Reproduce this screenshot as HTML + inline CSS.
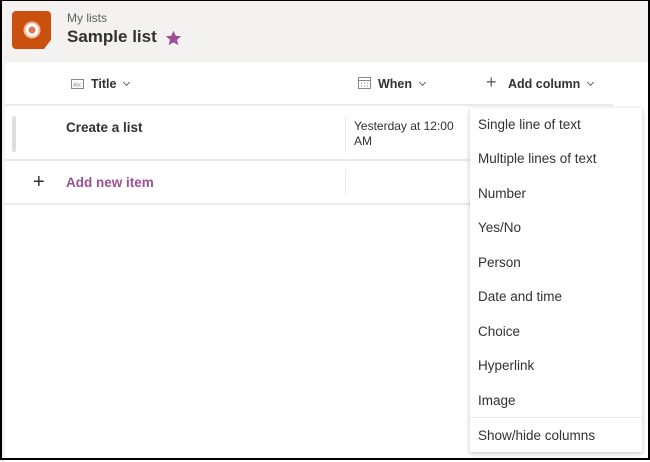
<!DOCTYPE html>
<html><head><meta charset="utf-8"><style>
*{box-sizing:border-box;margin:0;padding:0}
body{width:650px;height:460px;overflow:hidden;background:#f3f2f1;font-family:"Liberation Sans",sans-serif;color:#323130;position:relative}
.frame{position:absolute;left:0;top:0;width:650px;height:460px;border:2px solid #000;border-top-width:1px;pointer-events:none;z-index:10}
.card{position:absolute;left:5px;top:62px;width:650px;height:400px;background:#fff;border-radius:4px 0 0 0}
.logo{position:absolute;left:12px;top:11px;width:39px;height:38px;background:#ca5010;border-radius:4px;clip-path:polygon(0 0,100% 0,100% 76%,82% 100%,0 100%)}
.t{position:absolute;white-space:nowrap}
.hl{position:absolute;height:2px;background:#edebe9}
.vl{position:absolute;width:1px;background:#edebe9}
.menu{position:absolute;left:470px;top:108px;width:172px;height:344px;background:#fff;box-shadow:0 2px 6px rgba(0,0,0,.18),0 0 2px rgba(0,0,0,.1);font-size:13.5px;color:#323130}
.menu div{position:absolute;left:8px}
.chev{display:inline-block;width:5px;height:5px;border-right:1px solid #605e5c;border-bottom:1px solid #605e5c;transform:rotate(45deg);margin-left:8px;position:relative;top:-3px}
</style></head><body>
<div class="logo"><svg width="39" height="38" style="position:absolute;left:0;top:0"><circle cx="20" cy="19" r="8.5" fill="#f2b89a"/><circle cx="20" cy="19" r="6.5" fill="#fff"/><circle cx="20" cy="19" r="3.5" fill="#e07550"/></svg></div>
<div class="t" style="left:67px;top:11px;font-size:12px;color:#605e5c">My lists</div>
<div class="t" style="left:67px;top:27px;font-size:17px;font-weight:bold;color:#323130">Sample list</div>
<svg class="t" style="left:165px;top:30px" width="17" height="16" viewBox="0 0 24 23"><path d="M12 1l3.2 7.2 7.8.7-5.9 5.2 1.8 7.7L12 17.8 5.1 21.8l1.8-7.7L1 8.9l7.8-.7z" fill="#9b4f96"/></svg>
<div class="card"></div>
<svg class="t" style="left:71px;top:79px" width="13" height="10"><rect x=".5" y=".5" width="12" height="9" fill="none" stroke="#8a8886"/><text x="2" y="7.5" font-size="5" fill="#8a8886" font-family="Liberation Sans">Abc</text></svg>
<div class="t" style="left:91px;top:77px;font-size:12.5px;font-weight:bold">Title<span class="chev"></span></div>
<svg class="t" style="left:358px;top:77px" width="13" height="12"><rect x=".5" y=".5" width="12" height="11" fill="none" stroke="#8a8886"/><line x1="0" y1="3.5" x2="13" y2="3.5" stroke="#8a8886"/><path d="M3 6h1M6 6h1M9 6h1M3 9h1M6 9h1M9 9h1" stroke="#8a8886"/></svg>
<div class="t" style="left:378px;top:77px;font-size:12.5px;font-weight:bold">When<span class="chev"></span></div>
<div class="t" style="left:486px;top:72px;font-size:18px;font-weight:300;color:#605e5c">+</div>
<div class="t" style="left:508px;top:77px;font-size:12.5px;font-weight:bold">Add column<span class="chev"></span></div>
<div class="hl" style="left:5px;top:104px;width:608px"></div>
<div style="position:absolute;left:12px;top:116px;width:4px;height:36px;background:#e1dfdd;border-radius:2px"></div>
<div class="t" style="left:66px;top:120px;font-size:13.5px;font-weight:bold">Create a list</div>
<div class="vl" style="left:345px;top:115px;height:38px"></div>
<div class="t" style="left:354px;top:119px;font-size:12px;line-height:15px">Yesterday at 12:00<br>AM</div>
<div class="hl" style="left:5px;top:159px;width:470px"></div>
<div class="t" style="left:33px;top:171px;font-size:20px;font-weight:300;color:#323130">+</div>
<div class="t" style="left:66px;top:175px;font-size:13.5px;font-weight:bold;color:#9b4f96">Add new item</div>
<div class="vl" style="left:345px;top:169px;height:26px"></div>
<div class="hl" style="left:5px;top:203px;width:470px"></div>
<div class="menu">
<div style="top:9px">Single line of text</div>
<div style="top:43px">Multiple lines of text</div>
<div style="top:78px">Number</div>
<div style="top:112px">Yes/No</div>
<div style="top:147px">Person</div>
<div style="top:181px">Date and time</div>
<div style="top:216px">Choice</div>
<div style="top:250px">Hyperlink</div>
<div style="top:285px">Image</div>
<div style="left:0;top:309px;width:172px;height:1px;background:#edebe9"></div>
<div style="top:320px">Show/hide columns</div>
</div>
<div class="frame"></div>
</body></html>
